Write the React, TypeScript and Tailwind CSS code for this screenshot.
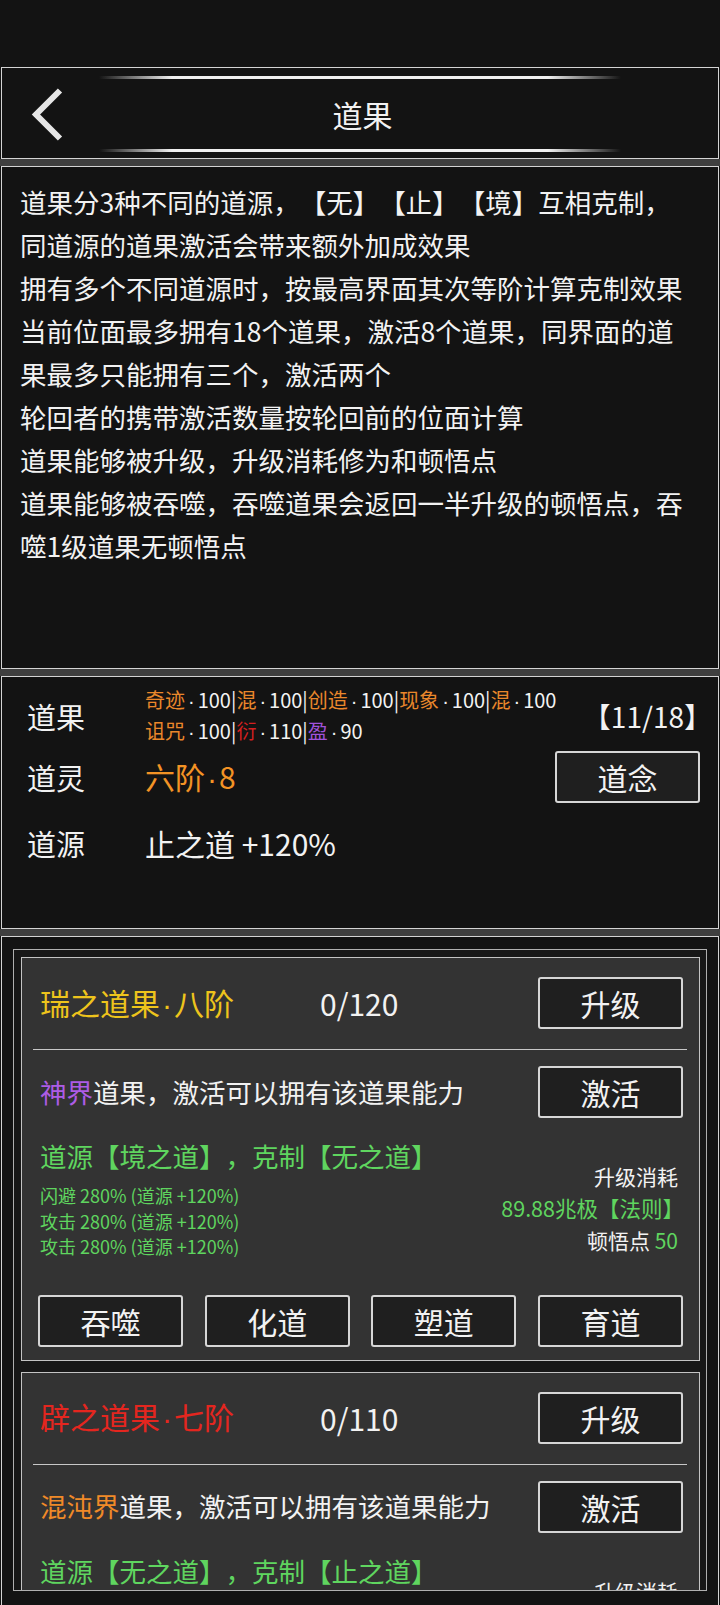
import { memo } from 'react';

// ─── Data ──────────────────────────────────────────────────────────────────────
const introLines = [
  '道果分3种不同的道源，【无】【止】【境】互相克制，',
  '同道源的道果激活会带来额外加成效果',
  '拥有多个不同道源时，按最高界面其次等阶计算克制效果',
  '当前位面最多拥有18个道果，激活8个道果，同界面的道',
  '果最多只能拥有三个，激活两个',
  '轮回者的携带激活数量按轮回前的位面计算',
  '道果能够被升级，升级消耗修为和顿悟点',
  '道果能够被吞噬，吞噬道果会返回一半升级的顿悟点，吞',
  '噬1级道果无顿悟点',
];

interface FruitCard {
  name:       string;
  rank:       string;
  titleClass: string;
  progress:   string;
  realm:      string;
  realmClass: string;
  source:     string;
  stats:      string[];
  cost:       string;
  insight:    number;
}

const cards: FruitCard[] = [
  {
    name:       '瑞之道果',
    rank:       '八阶',
    titleClass: 'text-[#eec41c]',
    progress:   '0/120',
    realm:      '神界',
    realmClass: 'text-[#ad5ce6]',
    source:     '道源【境之道】，克制【无之道】',
    stats:      ['闪避 280% (道源 +120%)', '攻击 280% (道源 +120%)', '攻击 280% (道源 +120%)'],
    cost:       '89.88兆极【法则】',
    insight:    50,
  },
  {
    name:       '辟之道果',
    rank:       '七阶',
    titleClass: 'text-[#e4261f]',
    progress:   '0/110',
    realm:      '混沌界',
    realmClass: 'text-[#f08a28]',
    source:     '道源【无之道】，克制【止之道】',
    stats:      ['闪避 240% (道源 +120%)', '攻击 240% (道源 +120%)', '攻击 240% (道源 +120%)'],
    cost:       '71.20兆极【法则】',
    insight:    45,
  },
];

// ─── Small pieces ─────────────────────────────────────────────────────────────
// narrow middle dot (the CJK font draws it full width)
function Dot({ wide = false }: { wide?: boolean }) {
  return (
    <span className={`font-['Liberation_Sans',sans-serif] ${wide ? 'px-[2px]' : 'px-[3px]'}`}>·</span>
  );
}

function Orange({ children }: { children: string }) {
  return <span className="text-[#ea872b]">{children}</span>;
}

function GameButton({ label }: { label: string }) {
  return (
    <button
      type="button"
      className="flex h-[52px] w-[145px] shrink-0 items-center justify-center rounded-[3px] border-2 border-[#d6d6d6] bg-[#1f1f1f] text-[30px] leading-none text-[#f2f2f2]"
    >
      {label}
    </button>
  );
}

function Strip() {
  return <div className="h-[7px] bg-[#3f3f3f]" />;
}

function GlowLine() {
  return (
    <div className="mx-auto h-[3px] w-[522px] bg-[linear-gradient(90deg,transparent,#f0f0f0_14%,#f0f0f0_86%,transparent)]" />
  );
}

const FruitCardView = memo(function FruitCardView({ card }: { card: FruitCard }) {
  return (
    <div className="shrink-0 border border-[#c4c4c4] bg-[#333333] px-[16px] pt-[19px] pb-[13px]">
      {/* Title row */}
      <div className="flex h-[52px] items-center">
        <span className={`w-[282px] shrink-0 pl-[2px] text-[30px] leading-none ${card.titleClass}`}>
          {card.name}
          <Dot wide />
          {card.rank}
        </span>
        <span className="flex-1 text-[30px] leading-none text-[#f2f2f2]">{card.progress}</span>
        <GameButton label="升级" />
      </div>

      <div className="mt-[20px] ml-[-5px] mr-[-4px] h-px bg-[#c8c8c8]" />

      {/* Activation row */}
      <div className="mt-[16px] flex h-[52px] items-center justify-between">
        <p className="pl-[2px] text-[26.5px] leading-none text-[#f2f2f2]">
          <span className={card.realmClass}>{card.realm}</span>道果，激活可以拥有该道果能力
        </p>
        <GameButton label="激活" />
      </div>

      {/* Source + cost */}
      <div className="mt-[20px] flex justify-between">
        <div className="pl-[2px]">
          <p className="text-[26.5px] leading-[36px] text-[#5fd55f]">{card.source}</p>
          <div className="mt-[9px]">
            {card.stats.map((s, i) => (
              <p key={i} className="text-[18px] leading-[25.5px] text-[#5fd55f]">{s}</p>
            ))}
          </div>
        </div>
        <div className="mt-[22px] mr-[5px] flex flex-col items-end text-[21px] leading-[32px] text-[#f2f2f2]">
          <p>升级消耗</p>
          <p className="mr-[-6px] text-[21.5px] text-[#5fd55f]">{card.cost}</p>
          <p>
            顿悟点 <span className="text-[#5fd55f]">{card.insight}</span>
          </p>
        </div>
      </div>

      {/* Actions */}
      <div className="mt-[35px] flex justify-between">
        <GameButton label="吞噬" />
        <GameButton label="化道" />
        <GameButton label="塑道" />
        <GameButton label="育道" />
      </div>
    </div>
  );
});

// ─── Page ─────────────────────────────────────────────────────────────────────
export default function App() {
  return (
    <div className="h-[1605px] overflow-hidden bg-[#131313] font-['Noto_Sans_CJK_SC','Noto_Sans',sans-serif] text-[#f2f2f2] [text-spacing-trim:space-all]">
      <div className="h-[67px]" />

      {/* Header */}
      <header className="mx-px flex h-[92px] flex-col border border-[#d4d4d4] pt-[8px]">
        <GlowLine />
        <div className="grid h-[70px] grid-cols-[1fr_auto_1fr] items-center">
          <svg width="36" height="57" viewBox="0 0 36 57" className="ml-[26px]" aria-label="返回">
            <polyline
              points="32,4.5 8,28.5 32,52.5"
              fill="none"
              stroke="#e6e6e6"
              strokeWidth="6"
              strokeLinejoin="miter"
            />
          </svg>
          <h1 className="ml-[5px] text-[30px] font-normal leading-none">道果</h1>
          <div />
        </div>
        <GlowLine />
      </header>

      <Strip />

      {/* Rules */}
      <section className="mx-px h-[503px] border border-[#d4d4d4] pl-[18px] pt-[13px]">
        {introLines.map((line, i) => (
          <p key={i} className="whitespace-nowrap text-[26.5px] leading-[43px]">{line}</p>
        ))}
      </section>

      <Strip />

      {/* Summary */}
      <section className="mx-px h-[253px] border border-[#d4d4d4] pl-[25px] pr-[18px] pt-[10px]">
        <div className="flex h-[58px] items-center">
          <span className="w-[118px] shrink-0 text-[29px] leading-none">道果</span>
          <div className="flex-1 whitespace-nowrap text-[20px] leading-[29.5px]">
            <p>
              <Orange>奇迹</Orange><Dot />100|<Orange>混</Orange><Dot />100|<Orange>创造</Orange><Dot />100|
              <Orange>现象</Orange><Dot />100|<Orange>混</Orange><Dot />100
            </p>
            <p>
              <Orange>诅咒</Orange><Dot />100|<span className="text-[#d42020]">衍</span><Dot />110|
              <span className="text-[#a052da]">盈</span><Dot />90
            </p>
          </div>
          <span className="mr-[-12px] shrink-0 text-[28px] leading-none">【11/18】</span>
        </div>

        <div className="mt-[6px] flex h-[52px] items-center">
          <span className="w-[118px] shrink-0 text-[29px] leading-none">道灵</span>
          <span className="flex-1 text-[30px] leading-none text-[#f39325]">
            六阶<Dot wide />8
          </span>
          <GameButton label="道念" />
        </div>

        <div className="mt-[20px] flex h-[40px] items-center">
          <span className="w-[118px] shrink-0 text-[29px] leading-none">道源</span>
          <span className="text-[30px] leading-none">止之道 +120%</span>
        </div>
      </section>

      <Strip />

      {/* Fruit list */}
      <section className="mx-px h-[700px] border border-[#d4d4d4] px-[11px] pt-[12px]">
        <div className="flex h-[642px] flex-col gap-[11px] overflow-hidden border border-[#b0b0b0] bg-[#181818] pl-[7px] pr-[6px] pt-[7px]">
          {cards.map((card) => (
            <FruitCardView key={card.name} card={card} />
          ))}
        </div>
      </section>
    </div>
  );
}
